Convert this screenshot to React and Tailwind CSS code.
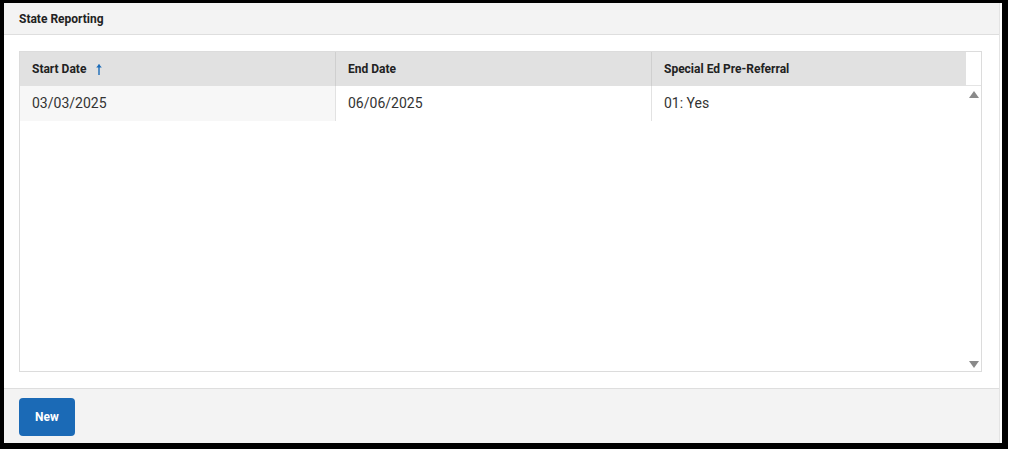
export default function App() {
  const font = { fontFamily: 'Roboto, "Liberation Sans", sans-serif' };
  return (
    <div className="w-[1011px] h-[453px] bg-white" style={font}>
      <div className="w-[1008px] h-[449px] border-l-4 border-t-[3px] border-r-[6px] border-b-[6px] border-black bg-white flex">
        <div className="w-[996px] h-full flex flex-col bg-white border-r border-[#e4e4e4]">
          <div className="h-[32px] bg-[#f3f3f3] border-b border-[#dedede] flex items-center pl-[15px]">
            <span className="text-[12px] font-bold text-[#222]">State Reporting</span>
          </div>
          <div className="flex-1 pl-[15px] pr-[17px] pt-[16px] pb-[16px]">
            <div className="h-[321px] border border-[#dcdcdc] flex">
              <div className="flex-1 flex flex-col">
                <div className="h-[34px] bg-[#e1e1e1] flex text-[12px] font-bold text-[#222]">
                  <div className="w-[316px] flex items-center pl-[12px] border-r border-[#cfcfcf]">
                    Start Date
                    <svg width="8" height="13" viewBox="0 0 8 13" className="ml-[9px]">
                      <path d="M4 12V1.5" stroke="#1a6bb8" strokeWidth="1.4" fill="none" />
                      <path d="M1.2 4.6L4 1.2L6.8 4.6Z" fill="#1a6bb8" />
                    </svg>
                  </div>
                  <div className="w-[316px] flex items-center pl-[12px] border-r border-[#cfcfcf]">End Date</div>
                  <div className="flex-1 flex items-center pl-[12px]">Special Ed Pre-Referral</div>
                </div>
                <div className="h-[35px] flex text-[14px] text-[#333]">
                  <div className="w-[316px] flex items-center pl-[12px] bg-[#f7f7f7] border-r border-[#e2e2e2]">03/03/2025</div>
                  <div className="w-[316px] flex items-center pl-[12px] bg-white border-r border-[#e2e2e2]">06/06/2025</div>
                  <div className="flex-1 flex items-center pl-[12px] bg-white">01: Yes</div>
                </div>
              </div>
              <div className="w-[15px] flex flex-col">
                <div className="h-[34px] bg-white border-b border-[#e4e4e4]" />
                <div className="flex-1 flex flex-col items-center justify-between pt-[5px] pb-[3px]">
                  <svg width="10" height="7" viewBox="0 0 10 7"><path d="M0 7L5 0L10 7Z" fill="#8a8a8a" /></svg>
                  <svg width="10" height="7" viewBox="0 0 10 7"><path d="M0 0L5 7L10 0Z" fill="#8a8a8a" /></svg>
                </div>
              </div>
            </div>
          </div>
          <div className="h-[55px] bg-[#f3f3f3] border-t border-[#dedede] pl-[15px] pt-[9px]">
            <button className="w-[56px] h-[38px] rounded-[4px] bg-[#1b6ab6] text-white text-[12px] font-bold">New</button>
          </div>
        </div>
      </div>
    </div>
  );
}
